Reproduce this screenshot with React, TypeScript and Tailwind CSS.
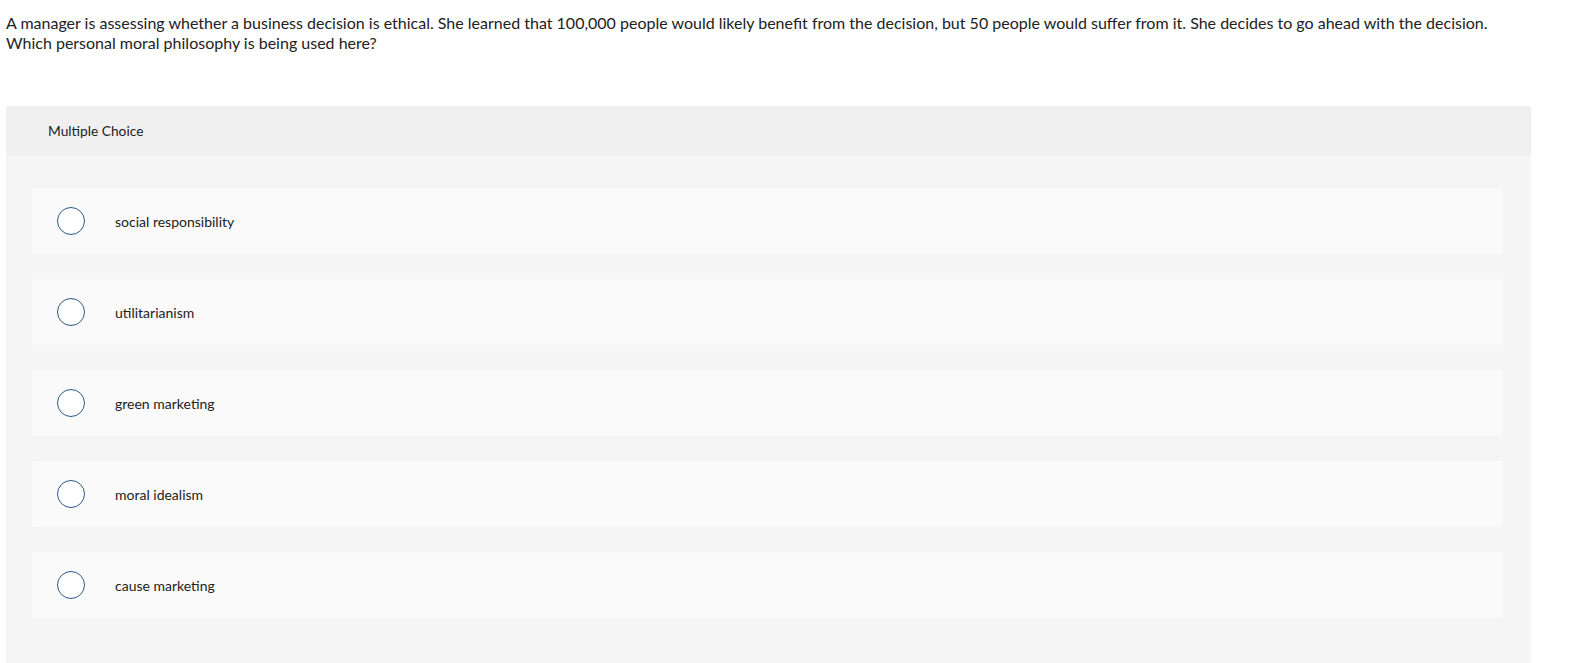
const choices = [
  'social responsibility',
  'utilitarianism',
  'green marketing',
  'moral idealism',
  'cause marketing',
];

export default function App() {
  return (
    <div className="min-h-screen bg-white text-[#222] font-['Lato',sans-serif]">
      <div className="pl-[6px] pt-[13px] text-[16px] leading-[20px] w-[1560px]">
        A manager is assessing whether a business decision is ethical. She learned that 100,000 people would likely benefit from the decision, but 50 people would suffer from it. She decides to go ahead with the decision.
        <br />
        Which personal moral philosophy is being used here?
      </div>

      <div className="ml-[6px] mt-[53px] w-[1525px] rounded-t-[3px] bg-[#f5f5f5] pb-[45px]">
        <div className="h-[50px] flex items-center pl-[42px] bg-[#f0f0f0] rounded-t-[3px] text-[13.75px]">
          Multiple Choice
        </div>
        <div className="flex flex-col gap-[25px] pt-[32px] px-[26px]">
          {choices.map((c) => (
            <div key={c} className="h-[66px] flex items-center bg-[#fafafa] rounded-[2px] w-[1471px]">
              <span className="ml-[25px] w-[28px] h-[28px] rounded-full border-[1.5px] border-[#2d5987] bg-white" />
              <span className="ml-[30px] text-[14px]">{c}</span>
            </div>
          ))}
        </div>
      </div>
    </div>
  );
}
